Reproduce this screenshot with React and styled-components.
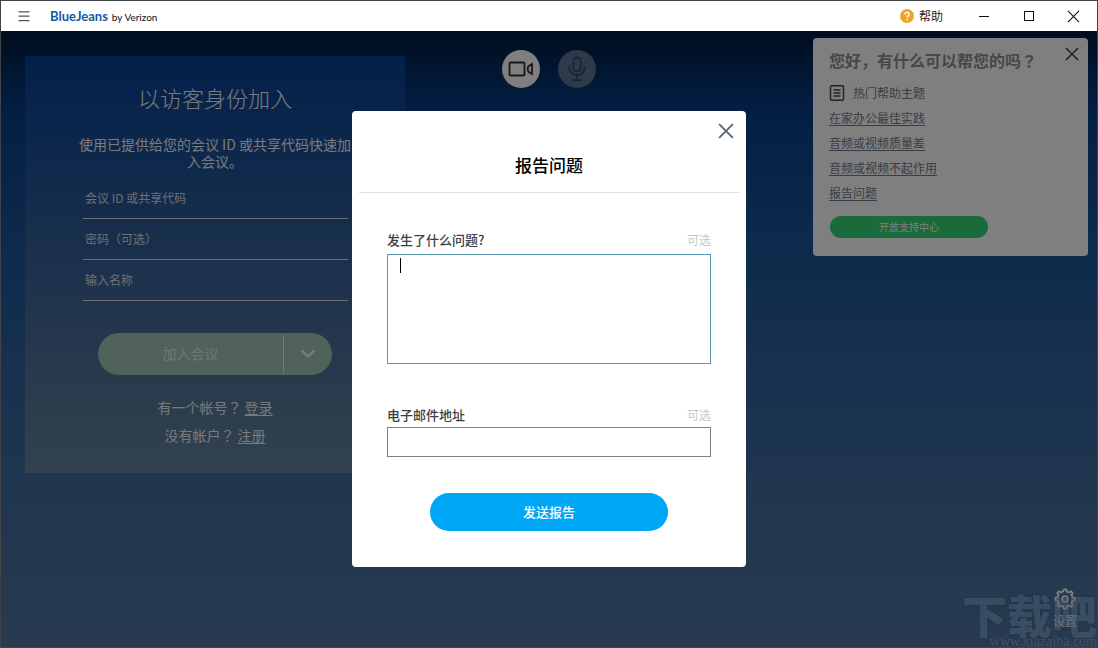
import React from "react";
import styled, { createGlobalStyle } from "styled-components";

const GlobalStyle = createGlobalStyle`
  * {
    box-sizing: border-box;
  }

  body {
    margin: 0;
  }

  body, button, input, textarea {
    font-family: "Noto Sans CJK SC", "Noto Sans", sans-serif;
  }

  h1, h2, p, ul {
    margin: 0;
    padding: 0;
    font-weight: 400;
  }

  button {
    border: 0;
    padding: 0;
    background: none;
    cursor: pointer;
  }

  svg {
    display: block;
  }
`;

const Window = styled.div`
  display: flex;
  flex-direction: column;
  min-height: 100vh;
  border: 1px solid #40444a;
`;

const TitleBar = styled.header`
  display: flex;
  align-items: center;
  height: 30px;
  padding: 0 1px 0 16px;
  background: #fff;
`;

const Brand = styled.div`
  display: flex;
  align-items: baseline;
  gap: 4px;
  margin-left: 19px;
  margin-right: auto;
  font-family: Lato, sans-serif;
  font-size: 10px;
  line-height: 16px;
  color: #111;

  strong {
    font-size: 13px;
    color: #1459a8;
  }
`;

const HelpButton = styled.button`
  display: flex;
  align-items: center;
  gap: 5px;
  margin-right: 18px;
  font-size: 12px;
  line-height: 18px;
  color: #222;
`;

const WindowButton = styled.button`
  display: grid;
  place-items: center;
  width: 45px;
  height: 30px;
  color: #111;
`;

const Stage = styled.main`
  position: relative;
  flex: 1;
  display: flex;
  flex-direction: column;
  justify-content: space-between;
  background: linear-gradient(
    #001c3e 0,
    #002450 20px,
    #083e88 80px,
    #20589a 240px,
    #406c9e 450px,
    #50769e 100%
  );
`;

const Columns = styled.div`
  display: grid;
  grid-template-columns: 1fr auto 1fr;
  align-items: start;
`;

const JoinPanel = styled.section`
  width: 380px;
  margin: 25px 0 0 24px;
  padding: 24px 50px;
  background: linear-gradient(#064096, #1a5098 22%, #40689a 58%, #66849a);
  color: #f2f4f8;
  text-align: center;
`;

const JoinTitle = styled.h1`
  font-size: 22px;
  font-weight: 300;
  line-height: 34px;
`;

const JoinText = styled.p`
  margin-top: 22px;
  font-size: 14px;
  line-height: 17px;
`;

const JoinForm = styled.form`
  display: flex;
  flex-direction: column;
  padding: 8px 7px 0 8px;
`;

const JoinInput = styled.input`
  height: 41px;
  padding: 0 2px 2px;
  border: 0;
  border-bottom: 1px solid #d8dfea;
  border-radius: 0;
  background: none;
  color: #fff;
  font-size: 12px;
  outline: 0;

  &::placeholder {
    color: #dcdfe4;
    opacity: 1;
  }
`;

const JoinActions = styled.div`
  display: flex;
  align-items: center;
  width: 234px;
  height: 42px;
  margin: 32px auto 0 15px;
  border-radius: 21px;
  background: #a0c4b4;
`;

const JoinButton = styled.button`
  flex: 1;
  height: 38px;
  padding-bottom: 2px;
  border-right: 1px solid #e8f0ec;
  color: #e4ece8;
  font-size: 14px;
`;

const JoinMore = styled.button`
  display: grid;
  place-items: center;
  width: 48px;
  height: 38px;
  color: #f0f4f2;
`;

const AccountLinks = styled.div`
  margin-top: 18px;
  font-size: 14px;
  line-height: 28px;

  a {
    color: inherit;
    text-underline-offset: 2px;
  }
`;

// the Traditional face centres the full-width question mark in its cell
const QuestionMark = styled.span`
  font-family: "Noto Sans CJK TC", sans-serif;
`;

const Devices = styled.div`
  display: flex;
  gap: 18px;
  margin-top: 19px;
`;

const DeviceButton = styled.button`
  display: grid;
  place-items: center;
  width: 38px;
  height: 38px;
  border-radius: 50%;
  background: ${({ $off }) => ($off ? "#5c7494" : "#fff")};
  color: ${({ $off }) => ($off ? "#344862" : "#303038")};
`;

const HelpCard = styled.aside`
  position: relative;
  justify-self: end;
  width: 275px;
  margin: 7px 9px 0 0;
  padding: 10px 16px 18px;
  border-radius: 4px;
  background: #fff;
`;

const HelpTitle = styled.h2`
  font-size: 16px;
  font-weight: 700;
  line-height: 24px;
  color: #8a8e96;
`;

const HelpTopic = styled.p`
  display: flex;
  align-items: center;
  gap: 8px;
  height: 25px;
  margin-top: 8px;
  font-size: 12px;
  color: #747a86;

  svg {
    color: #40485a;
  }
`;

const HelpLinks = styled.ul`
  list-style: none;
  font-size: 12px;
  line-height: 25px;

  a {
    color: #747a86;
    text-underline-offset: 2px;
  }
`;

const SupportButton = styled.button`
  display: block;
  width: 158px;
  height: 22px;
  margin: 11px 0 0 1px;
  padding-bottom: 2px;
  border-radius: 11px;
  background: #34d478;
  color: #fff;
  font-size: 10px;
`;

const CloseButton = styled.button`
  position: absolute;
  top: ${({ $inset }) => $inset}px;
  right: ${({ $inset }) => $inset}px;
  display: grid;
  place-items: center;
  width: 20px;
  height: 20px;
  color: ${({ $color }) => $color};
`;

const Settings = styled.button`
  display: flex;
  flex-direction: column;
  align-items: center;
  gap: 2px;
  align-self: flex-end;
  margin: 0 20px 17px 0;
  color: #fff;
  font-size: 12px;
  line-height: 18px;
`;

const Overlay = styled.div`
  position: absolute;
  inset: 0;
  display: flex;
  align-items: center;
  justify-content: center;
  background: rgba(0, 0, 0, 0.5);
`;

const Modal = styled.section`
  position: relative;
  width: 394px;
  padding: 0 7px 36px;
  border-radius: 4px;
  background: #fff;
`;

const ModalTitle = styled.h2`
  padding: 41px 0 14px;
  border-bottom: 1px solid #dde1e4;
  font-size: 17px;
  font-weight: 500;
  line-height: 26px;
  text-align: center;
  color: #000;
`;

const ReportForm = styled.form`
  display: flex;
  flex-direction: column;
  padding: 34px 28px 0;
`;

const Field = styled.div`
  display: flex;
  flex-direction: column;
  gap: ${({ $gap }) => $gap}px;
`;

const FieldHead = styled.div`
  display: flex;
  justify-content: space-between;
  align-items: center;
  height: 24px;
  font-size: 12px;
  color: #c4c8cc;

  label {
    font-size: 13px;
    font-weight: 500;
    color: #3c4044;
  }
`;

const TextAreaWrap = styled.div`
  position: relative;
  display: flex;
  margin-bottom: 38px;
`;

const TextArea = styled.textarea`
  width: 100%;
  height: 110px;
  padding: 4px 12px;
  border: 1px solid #5c9ab4;
  border-radius: 0;
  outline: 0;
  resize: none;
  font-size: 13px;
`;

const Caret = styled.span`
  position: absolute;
  top: 4px;
  left: 13px;
  width: 1px;
  height: 15px;
  background: #000;
`;

const TextInput = styled.input`
  height: 30px;
  padding: 0 12px;
  border: 1px solid #7c8084;
  border-radius: 0;
  outline: 0;
  font-size: 13px;
`;

const SendButton = styled.button`
  align-self: center;
  width: 238px;
  height: 38px;
  margin-top: 36px;
  padding-bottom: 2px;
  border-radius: 19px;
  background: #00a6f6;
  color: #fff;
  font-size: 13px;
  font-weight: 500;
`;

const Watermark = styled.div`
  position: absolute;
  right: 0;
  bottom: 0;
  color: rgba(130, 152, 172, 0.28);
  text-align: right;
  pointer-events: none;

  b {
    display: block;
    font-size: 45px;
    font-weight: 900;
    line-height: 45px;
    text-shadow: 0 0 2px rgba(10, 25, 45, 0.3);
  }

  small {
    display: block;
    font-family: "Liberation Serif", serif;
    font-size: 14px;
    line-height: 10px;
  }
`;

const Cross = ({ size, width }) => (
  <svg width={size} height={size} viewBox="0 0 14 14" fill="none" stroke="currentColor" strokeWidth={width}>
    <path d="M1 1l12 12M13 1L1 13" />
  </svg>
);

const MenuIcon = () => (
  <svg width="14" height="14" viewBox="0 0 14 14" stroke="#555" strokeWidth="1.3">
    <path d="M1.5 2.8h11M1.5 7.2h11M1.5 11.6h11" />
  </svg>
);

const QuestionIcon = () => (
  <svg width="14" height="14" viewBox="0 0 14 14" fill="none">
    <circle cx="7" cy="7" r="7" fill="#efa42e" />
    <path d="M4.9 5.4c0-2.8 4.3-2.7 4.3-.1 0 1.5-2.1 1.6-2.1 3.1" stroke="#fff" strokeWidth="1.4" />
    <circle cx="7.1" cy="10.6" r="0.9" fill="#fff" />
  </svg>
);

const CameraIcon = () => (
  <svg width="26" height="16" viewBox="0 0 26 16" fill="none" stroke="currentColor" strokeWidth="1.8">
    <rect x="1.5" y="1.5" width="15" height="13" rx="1" />
    <path d="M24 3v10l-3-1.800c-1.800-1.400-1.800-5 0-6.400z" />
  </svg>
);

const MicIcon = () => (
  <svg width="18" height="26" viewBox="0 0 18 26" fill="none" stroke="currentColor" strokeWidth="1.8">
    <rect x="5.3" y="1.5" width="7.4" height="14" rx="3.7" />
    <path d="M1.500 10.500v1.800c0 9 15 9 15 0v-1.800M9 19v5M4 24.200h10" />
  </svg>
);

const ListIcon = () => (
  <svg width="16" height="18" viewBox="0 0 16 18" fill="none" stroke="currentColor" strokeWidth="1.5">
    <rect x="1.5" y="1.8" width="13" height="14.5" rx="1" />
    <path d="M4.500 6h7M4.500 9h7M4.500 12h7" />
  </svg>
);

const teeth = [0, 45, 90, 135, 180, 225, 270, 315];

const GearIcon = () => (
  <svg width="22" height="22" viewBox="0 0 22 22" fill="none" stroke="currentColor" strokeWidth="1.8" strokeLinejoin="round">
    {teeth.map(angle => (
      <path
        key={angle}
        transform={`rotate(${angle} 11 11)`}
        d="M7.900 3.600L9.300 3.700L9.700 1.300h2.600l.4 2.400L14.100 3.600"
      />
    ))}
    <circle cx="11" cy="11" r="2.8" />
  </svg>
);

const links = ["在家办公最佳实践", "音频或视频质量差", "音频或视频不起作用", "报告问题"];

export default function App() {
  return (
    <Window>
      <GlobalStyle />
      <TitleBar>
        <button type="button" aria-label="菜单">
          <MenuIcon />
        </button>
        <Brand>
          <strong>BlueJeans</strong>
          <span>by Verizon</span>
        </Brand>
        <HelpButton type="button">
          <QuestionIcon />
          帮助
        </HelpButton>
        <WindowButton type="button" aria-label="最小化">
          <svg width="10" height="10" stroke="currentColor">
            <path d="M0 5.500h10" />
          </svg>
        </WindowButton>
        <WindowButton type="button" aria-label="最大化">
          <svg width="10" height="10" fill="none" stroke="currentColor">
            <rect x="0.5" y="0.5" width="9" height="9" />
          </svg>
        </WindowButton>
        <WindowButton type="button" aria-label="关闭">
          <Cross size={13} width={1.2} />
        </WindowButton>
      </TitleBar>
      <Stage>
        <Columns>
          <JoinPanel>
            <JoinTitle>以访客身份加入</JoinTitle>
            <JoinText>使用已提供给您的会议 ID 或共享代码快速加入会议。</JoinText>
            <JoinForm>
              <JoinInput aria-label="会议 ID 或共享代码" placeholder="会议 ID 或共享代码" />
              <JoinInput aria-label="密码（可选）" placeholder="密码（可选）" />
              <JoinInput aria-label="输入名称" placeholder="输入名称" />
              <JoinActions>
                <JoinButton type="button">加入会议</JoinButton>
                <JoinMore type="button" aria-label="更多选项">
                  <svg width="16" height="10" viewBox="0 0 16 10" fill="none" stroke="currentColor" strokeWidth="2.6">
                    <path d="M1.500 1.500L8 7.500l6.500-6" />
                  </svg>
                </JoinMore>
              </JoinActions>
            </JoinForm>
            <AccountLinks>
              <p>
                有一个帐号<QuestionMark>？</QuestionMark> <a href="#login">登录</a>
              </p>
              <p>
                没有帐户<QuestionMark>？</QuestionMark> <a href="#signup">注册</a>
              </p>
            </AccountLinks>
          </JoinPanel>
          <Devices>
            <DeviceButton type="button" aria-label="摄像头">
              <CameraIcon />
            </DeviceButton>
            <DeviceButton type="button" aria-label="麦克风" $off>
              <MicIcon />
            </DeviceButton>
          </Devices>
          <HelpCard>
            <CloseButton type="button" aria-label="关闭帮助" $inset={6} $color="#40485a">
              <Cross size={14} width={1.6} />
            </CloseButton>
            <HelpTitle>
              您好，有什么可以帮您的吗<QuestionMark>？</QuestionMark>
            </HelpTitle>
            <HelpTopic>
              <ListIcon />
              热门帮助主题
            </HelpTopic>
            <HelpLinks>
              {links.map(link => (
                <li key={link}>
                  <a href="#help">{link}</a>
                </li>
              ))}
            </HelpLinks>
            <SupportButton type="button">开放支持中心</SupportButton>
          </HelpCard>
        </Columns>
        <Settings type="button">
          <GearIcon />
          设置
        </Settings>
        <Overlay>
          <Modal role="dialog" aria-labelledby="report-title">
            <CloseButton type="button" aria-label="关闭" $inset={10} $color="#5c6874">
              <Cross size={16} width={1.7} />
            </CloseButton>
            <ModalTitle id="report-title">报告问题</ModalTitle>
            <ReportForm>
              <Field $gap={3}>
                <FieldHead>
                  <label htmlFor="problem">发生了什么问题?</label>
                  <span>可选</span>
                </FieldHead>
                <TextAreaWrap>
                  <TextArea id="problem" />
                  <Caret />
                </TextAreaWrap>
              </Field>
              <Field $gap={1}>
                <FieldHead>
                  <label htmlFor="email">电子邮件地址</label>
                  <span>可选</span>
                </FieldHead>
                <TextInput id="email" type="email" />
              </Field>
              <SendButton type="button">发送报告</SendButton>
            </ReportForm>
          </Modal>
        </Overlay>
        <Watermark>
          <b>下载吧</b>
          <small>www.xiazaiba.com</small>
        </Watermark>
      </Stage>
    </Window>
  );
}
